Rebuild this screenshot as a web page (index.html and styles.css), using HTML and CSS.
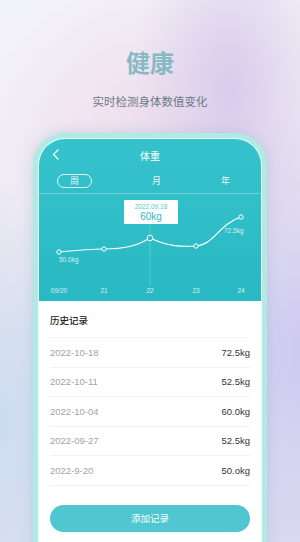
FILE: index.html
```html
<!DOCTYPE html>
<html>
  <head>
    <meta charset="utf-8">
    <title>健康</title>
    <meta name="viewport" content="width=device-width, initial-scale=1">
    <link rel="stylesheet" href="styles.css">
  </head>
  <body>
    <header class="hero">
      <h1>健康</h1>
      <p>实时检测身体数值变化</p>
    </header>

    <div class="phone">
      <div class="screen">
        <section class="top">
          <div class="nav">
            <svg class="back" width="7" height="11" viewBox="0 0 7 11">
              <path d="M6 1 L1.5 5.5 L6 10" fill="none" stroke="#fff" stroke-width="1.3" stroke-linecap="round" stroke-linejoin="round"/>
            </svg>
            <span>体重</span>
          </div>
          <div class="tabs">
            <span class="tab on">周</span>
            <span class="tab">月</span>
            <span class="tab">年</span>
          </div>
          <div class="chart">
            <div class="tip">
              <small>2022.09.18</small>
              <b>60kg</b>
            </div>
            <svg width="222" height="107" viewBox="0 0 222 107">
              <line x1="111" y1="30" x2="111" y2="92" stroke="rgba(255,255,255,0.35)" stroke-width="0.6"/>
              <path d="M20 58 C40 56 50 55 65 55 C85 55 98 52 111 44 C128 52 140 53 157 52 C175 51 180 30 202 23"
                    fill="none" stroke="#fff" stroke-width="1.2"/>
              <g fill="#30bcc6" stroke="#fff" stroke-width="1">
                <circle cx="20" cy="58" r="2.2"/>
                <circle cx="65" cy="55" r="2.2"/>
                <circle cx="111" cy="44" r="2.8"/>
                <circle cx="157" cy="52" r="2.2"/>
                <circle cx="202" cy="23" r="2.2"/>
              </g>
              <g fill="rgba(255,255,255,0.8)" font-size="6.5" font-family="Liberation Sans, sans-serif">
                <text x="20" y="68">50.0kg</text>
                <text x="185" y="39">72.5kg</text>
              </g>
              <g fill="rgba(255,255,255,0.8)" font-size="6.5" font-family="Liberation Sans, sans-serif" text-anchor="middle">
                <text x="20" y="99">09/20</text>
                <text x="65" y="99">21</text>
                <text x="111" y="99">22</text>
                <text x="157" y="99">23</text>
                <text x="202" y="99">24</text>
              </g>
            </svg>
          </div>
        </section>

        <section class="history">
          <h2>历史记录</h2>
          <ul>
            <li><span>2022-10-18</span><b>72.5kg</b></li>
            <li><span>2022-10-11</span><b>52.5kg</b></li>
            <li><span>2022-10-04</span><b>60.0kg</b></li>
            <li><span>2022-09-27</span><b>52.5kg</b></li>
            <li><span>2022-9-20</span><b>50.okg</b></li>
          </ul>
          <button type="button" class="add">添加记录</button>
        </section>
      </div>
    </div>
  </body>
</html>
```

FILE: styles.css
```css
html, body {
  height: 100%;
}

body {
  margin: 0;
  overflow: hidden;
  font-family: "Noto Sans CJK SC", "Liberation Sans", sans-serif;
  background:
    radial-gradient(ellipse 140px 260px at 230px 90px, rgba(214, 200, 235, 0.9), transparent 70%),
    radial-gradient(ellipse 200px 200px at 140px 120px, rgba(240, 222, 236, 0.9), transparent 75%),
    radial-gradient(ellipse 160px 300px at 300px 350px, rgba(205, 200, 240, 0.95), transparent 80%),
    radial-gradient(ellipse 140px 300px at 0px 420px, rgba(200, 220, 240, 0.9), transparent 80%),
    linear-gradient(160deg, #f3f4f9 0%, #ede7f1 45%, #dcdcf0 100%);
}

.hero {
  text-align: center;
  padding-top: 46px;
  height: 87px;
}

.hero h1 {
  margin: 0;
  font-size: 24px;
  line-height: 32px;
  font-weight: 700;
  color: #86b9c3;
}

.hero p {
  margin: 15px 0 0;
  font-size: 11.5px;
  line-height: 16px;
  color: #6d7a86;
}

.phone {
  margin: 0 33px;
  height: 420px;
  border: 5px solid #b2e9e3;
  border-bottom: 0;
  border-radius: 32px 32px 0 0;
  background: #e8fbfa;
  padding: 1px 1px 0;
  box-shadow: 0 0 14px rgba(120, 170, 200, 0.35);
}

.screen {
  height: 100%;
  border-radius: 26px 26px 0 0;
  overflow: hidden;
  background: #fff;
}

.top {
  background: linear-gradient(180deg, #36c2cb 0%, #29b9c4 100%);
  color: #fff;
}

.nav {
  position: relative;
  height: 30px;
  display: flex;
  align-items: center;
  justify-content: center;
  font-size: 10px;
  padding-top: 1px;
}

.back {
  position: absolute;
  left: 13px;
  top: 10px;
}

.tabs {
  display: flex;
  justify-content: space-between;
  align-items: center;
  height: 21px;
  padding: 0 31px 2px 18px;
  border-bottom: 1px solid rgba(255, 255, 255, 0.3);
}

.tab {
  font-size: 9px;
  line-height: 12px;
  color: rgba(255, 255, 255, 0.9);
}

.tab.on {
  width: 33px;
  height: 12px;
  border: 1px solid rgba(255, 255, 255, 0.85);
  border-radius: 8px;
  text-align: center;
}

.chart {
  position: relative;
  height: 107px;
}

.chart svg {
  display: block;
}

.tip {
  position: absolute;
  left: 85px;
  top: 6px;
  width: 54px;
  height: 24px;
  background: #fff;
  border-radius: 1px;
  display: flex;
  flex-direction: column;
  align-items: center;
  color: #2fb7c2;
}

.tip small {
  font-family: "Liberation Sans", sans-serif;
  font-size: 6.5px;
  line-height: 9px;
  margin-top: 2px;
  opacity: 0.8;
}

.tip b {
  font-family: "Liberation Sans", sans-serif;
  font-weight: 400;
  font-size: 10px;
  line-height: 12px;
}

.history {
  padding: 0 11px;
}

.history h2 {
  margin: 0;
  height: 36px;
  line-height: 38px;
  font-size: 9.5px;
  font-weight: 500;
  color: #222;
  border-bottom: 1px solid #f2f2f2;
}

.history ul {
  list-style: none;
  margin: 0;
  padding: 0;
}

.history li {
  display: flex;
  justify-content: space-between;
  align-items: center;
  height: 28.5px;
  border-bottom: 1px solid #f2f2f2;
  font-family: "Liberation Sans", sans-serif;
  font-size: 9.5px;
}

.history li span {
  color: #a3a3a3;
}

.history li b {
  font-weight: 400;
  color: #333;
}

.add {
  display: block;
  width: 100%;
  height: 27px;
  margin-top: 19px;
  border: 0;
  border-radius: 14px;
  background: #4fc6d0;
  color: #fff;
  font-family: "Noto Sans CJK SC", sans-serif;
  font-size: 9.5px;
}
```
